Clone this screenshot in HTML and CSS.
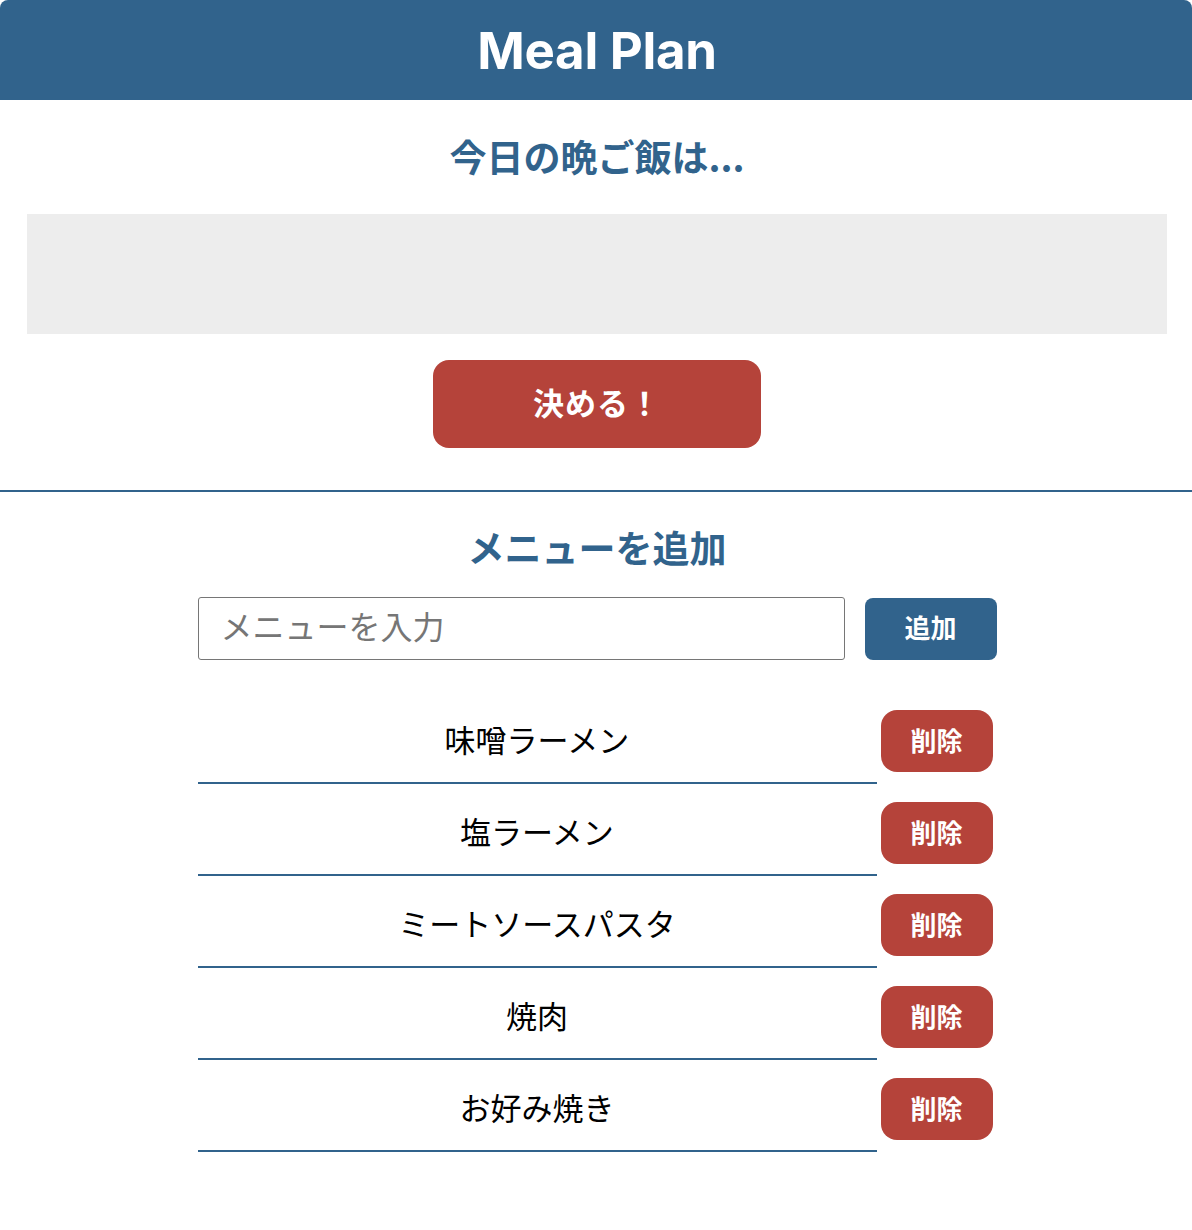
FILE: index.html
```html
<!DOCTYPE html>
<html lang="ja">
<head>
<meta charset="utf-8">
<title>Meal Plan</title>
<link rel="stylesheet" href="styles.css">
</head>
<body>
<header class="app-header">
  <h1 class="app-title">Meal Plan</h1>
</header>
<main>
  <section class="decide">
    <h2 class="section-title">今日の晩ご飯は...</h2>
    <div class="result"></div>
    <button class="decide-btn" type="button">決める！</button>
  </section>
  <section class="add">
    <h2 class="section-title">メニューを追加</h2>
    <div class="add-row">
      <input class="menu-input" type="text" placeholder="メニューを入力">
      <button class="add-btn" type="button">追加</button>
    </div>
    <ul class="menu-list">
      <li class="menu-item"><span class="menu-name">味噌ラーメン</span><button class="del-btn" type="button">削除</button></li>
      <li class="menu-item"><span class="menu-name">塩ラーメン</span><button class="del-btn" type="button">削除</button></li>
      <li class="menu-item"><span class="menu-name">ミートソースパスタ</span><button class="del-btn" type="button">削除</button></li>
      <li class="menu-item"><span class="menu-name">焼肉</span><button class="del-btn" type="button">削除</button></li>
      <li class="menu-item"><span class="menu-name">お好み焼き</span><button class="del-btn" type="button">削除</button></li>
    </ul>
  </section>
</main>
</body>
</html>
```
FILE: styles.css
```css
* { box-sizing: border-box; }
html, body { margin: 0; padding: 0; background: #fff; }
body {
  font-family: "Noto Sans CJK JP", "Noto Sans", sans-serif;
  color: #000;
}
.app-header {
  background: #31638c;
  height: 100px;
  display: flex;
  align-items: center;
  justify-content: center;
  border-radius: 8px 8px 0 0;
}
.app-title {
  margin: 0 0 0 2px;
  color: #fff;
  font-family: Inter, "Liberation Sans", sans-serif;
  font-weight: 700;
  font-size: 51px;
  letter-spacing: -0.3px;
  line-height: 1;
}
.section-title {
  margin: 0;
  color: #31638c;
  font-weight: 700;
  font-size: 37px;
  line-height: 1;
  text-align: center;
}
.decide {
  display: flex;
  flex-direction: column;
  align-items: center;
  padding: 38px 25px 42px 27px;
  border-bottom: 2px solid #31638c;
}
.result {
  align-self: stretch;
  height: 120px;
  background: #ededed;
  margin-top: 39px;
}
.decide-btn {
  margin-top: 26px;
  width: 328px;
  height: 88px;
  padding: 0 0 5px;
  border: none;
  border-radius: 16px;
  background: #b5433a;
  color: #fff;
  font-family: inherit;
  font-weight: 700;
  font-size: 31px;
  letter-spacing: 1px;
  cursor: pointer;
}
.add {
  display: flex;
  flex-direction: column;
  align-items: center;
  padding-top: 37px;
  padding-left: 2px;
}
.add-row {
  display: flex;
  align-items: flex-end;
  gap: 20px;
  margin-top: 31px;
  width: 799px;
}
.menu-input {
  width: 647px;
  height: 63px;
  border: 1px solid #767676;
  border-radius: 3px;
  padding: 0 22px 7px;
  font-family: inherit;
  font-size: 32px;
  color: #000;
}
.menu-input::placeholder { color: #767676; }
.add-btn {
  width: 132px;
  height: 62px;
  padding: 0 0 5px;
  border: none;
  border-radius: 8px;
  background: #31638c;
  color: #fff;
  font-family: inherit;
  font-weight: 700;
  font-size: 26px;
}
.menu-list {
  list-style: none;
  margin: 32px 0 0;
  padding: 0;
  width: 799px;
}
.menu-item {
  display: flex;
  align-items: center;
}
.menu-name {
  width: 679px;
  height: 92px;
  display: flex;
  align-items: center;
  justify-content: center;
  border-bottom: 2px solid #31638c;
  font-size: 31px;
  padding-top: 2px;
}
.del-btn {
  margin-left: 4px;
  margin-top: 6px;
  width: 112px;
  height: 62px;
  padding: 0 0 4px;
  border: none;
  border-radius: 16px;
  background: #b5433a;
  color: #fff;
  font-family: inherit;
  font-weight: 700;
  font-size: 26px;
}
```
